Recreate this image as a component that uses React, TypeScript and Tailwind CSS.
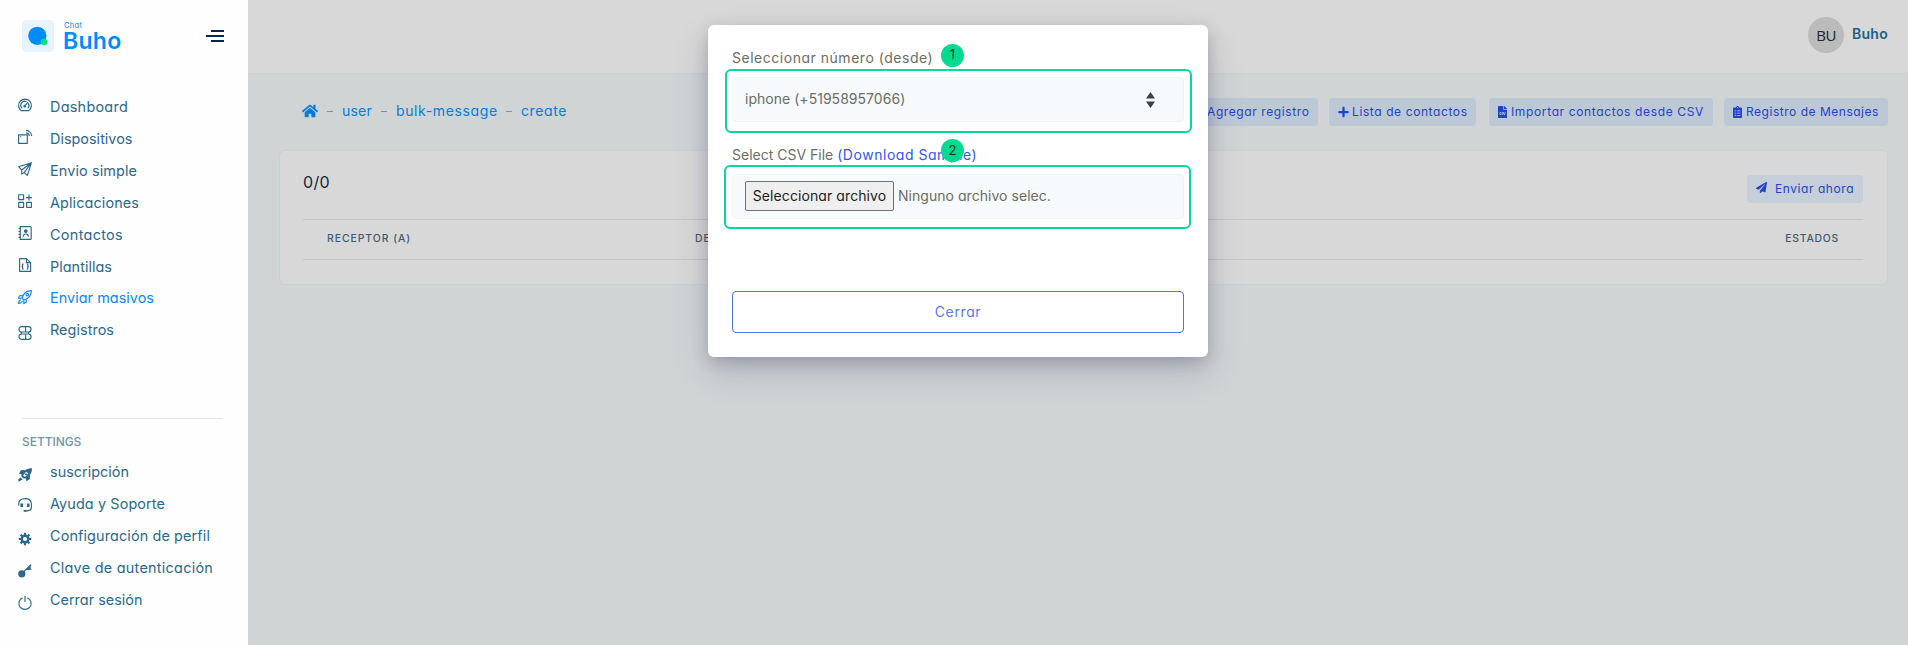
import type { ReactNode } from "react";
import { FaHome, FaPlus, FaFileCsv, FaClipboardList, FaPaperPlane } from "react-icons/fa";

function Icon({ children, shift = "" }: { children: ReactNode; shift?: string }) {
  return (
    <svg
      viewBox="0 0 14 14"
      className={`h-[14px] w-[14px] shrink-0 overflow-visible ${shift}`}
      fill="none"
      stroke="currentColor"
      strokeWidth="1.15"
      strokeLinejoin="round"
    >
      {children}
    </svg>
  );
}

const up = "mb-[3px]";
const down = "mt-[6px]";

const menu = [
  {
    label: "Dashboard",
    spacing: "tracking-[0.27px]",
    icon: (
      <Icon shift={up}>
        <path d="M3.2 12.6A6.4 6.4 0 1 1 10.8 12.6Z" />
        <path d="M4.2 10.2A4 4 0 0 1 8.6 3.6M10.3 5.2A4 4 0 0 1 9.8 10.2M6.6 8.4 10 4" />
        <circle cx="6.8" cy="8.2" r="0.9" />
      </Icon>
    ),
  },
  {
    label: "Dispositivos",
    spacing: "tracking-[0.02px]",
    icon: (
      <Icon shift={up}>
        <path d="M.6 4.8H9.3V13.4H.6ZM8.2 2.9A3.4 3.4 0 0 1 11.3 6M8 .4A6 6 0 0 1 13.7 6" />
        <path d="M2.3 6.6H3.2" />
      </Icon>
    ),
  },
  {
    label: "Envio simple",
    spacing: "tracking-[0.12px]",
    icon: (
      <Icon shift={up}>
        <path d="M13.4.7.6 4.7 3.7 8V12L6.2 10.6 9.4 13.3ZM13.4.7 3.7 8M13.4.7 6.2 10.6" />
      </Icon>
    ),
  },
  {
    label: "Aplicaciones",
    spacing: "tracking-[0.12px]",
    icon: (
      <Icon shift={up}>
        <path d="M.7.7H5.6V5.6H.7ZM.7 8.4H5.6V13.3H.7ZM8.6 8.4H13.4V13.3H8.6ZM11 .6V6.6M8 3.6H14" />
      </Icon>
    ),
  },
  {
    label: "Contactos",
    spacing: "tracking-[0.33px]",
    icon: (
      <Icon shift={up}>
        <path d="M2.2.6H12.2Q13.2.6 13.2 1.6V12.4Q13.2 13.4 12.2 13.4H2.2Z" />
        <path d="M.6 2.5H2.6M.6 5.4H2.6M.6 8.4H2.6M.6 11.4H2.6" />
        <circle cx="7.8" cy="5.1" r="1.3" fill="currentColor" />
        <path d="M5.2 10.6Q5.4 8 7.8 8T10.4 10.6" />
      </Icon>
    ),
  },
  {
    label: "Plantillas",
    spacing: "tracking-[0.04px]",
    icon: (
      <Icon shift={up}>
        <path d="M1.6.6H8.4L12.6 4.6V13.4H1.6ZM8.4.6V4.6H12.6" />
        <path d="M5.6 6H4.6V8L4 8.5 4.6 9V11H5.6M8.8 6H9.8V8L10.4 8.5 9.8 9V11H8.8" />
      </Icon>
    ),
  },
  {
    label: "Enviar masivos",
    spacing: "tracking-[0.05px]",
    active: true,
    icon: (
      <Icon shift={up}>
        <path d="M4 8.2C5 4 8.4.8 13.4.6 13.2 5.6 10 9 5.8 10ZM4.6 5.8 1.8 5.6.4 8.2 4 8.2M8.2 9.4V12.2L5.8 13.6V10M3 9.8Q.8 10.2.5 13.5 3.8 13.2 4.2 11" />
        <circle cx="9.3" cy="4.7" r="1.2" />
      </Icon>
    ),
  },
  {
    label: "Registros",
    spacing: "tracking-[0.06px]",
    icon: (
      <Icon shift={down}>
        <rect x="1" y=".6" width="12" height="5.4" rx="2.6" />
        <rect x="1" y="8" width="12" height="5.4" rx="2.6" />
        <path d="M7.6.6V6M7.6 8V13.4M3.4 6V8M10.6 6V8" />
      </Icon>
    ),
  },
];

const settings = [
  {
    label: "suscripción",
    spacing: "tracking-[0.03px]",
    icon: (
      <Icon shift={down}>
        <path
          d="M14 .2C11.6.2 9 .6 7.2 2.2L3 2 1 5.8 3.4 6.2V8.4L5.6 10.6H7.8L8.4 13.2 12 11 11.8 7C13.4 5.2 14 2.8 14 .2Z"
          fill="currentColor"
          stroke="none"
        />
        <path d="M5 7.2 8.2 3.8 10.4 5.6 7 9Z" fill="#fefefe" stroke="none" />
        <circle cx="8" cy="6.2" r="1" fill="currentColor" stroke="none" />
        <path d="M2.6 9.6 4.6 11.4.6 13.8.2 11.4Z" fill="currentColor" stroke="none" />
      </Icon>
    ),
  },
  {
    label: "Ayuda y Soporte",
    spacing: "tracking-[0.12px]",
    icon: (
      <Icon shift="mt-[2px]">
        <path d="M.7 7.4V5.6Q1 .7 7 .6T13.4 5.8V9.6Q13.2 12.6 10 12.8H7" />
        <path d="M3.7 5.4V9M10.2 5.4V9" strokeWidth="2.6" />
        <path d="M5.6 12.8H8.6" strokeWidth="1.8" />
      </Icon>
    ),
  },
  {
    label: "Configuración de perfil",
    spacing: "tracking-[0.13px]",
    icon: (
      <Icon shift={down}>
        <circle cx="7" cy="7" r="3.3" strokeWidth="2.4" />
        <path
          d="M7 .7V3M7 11V13.3M.7 7H3M11 7H13.3M2.6 2.6 4.2 4.2M9.8 9.8 11.4 11.4M11.4 2.6 9.8 4.2M4.2 9.8 2.6 11.4"
          strokeWidth="2.2"
        />
      </Icon>
    ),
  },
  {
    label: "Clave de autenticación",
    spacing: "tracking-[0.27px]",
    icon: (
      <Icon shift={down}>
        <circle cx="3.8" cy="9.8" r="3.6" fill="currentColor" stroke="none" />
        <path d="M5.4 8 13.2.8" strokeWidth="1.2" />
        <path d="M8 5.4 11.2 1.8 12.6.8V4.4L14 5.2 10.8 6.2Z" fill="currentColor" stroke="none" />
      </Icon>
    ),
  },
  {
    label: "Cerrar sesión",
    spacing: "tracking-[0.02px]",
    icon: (
      <Icon shift={down}>
        <path d="M4.6 1.7A6.1 6.1 0 1 0 9.4 1.7M7 0V6" />
      </Icon>
    ),
  },
];

function Sidebar() {
  return (
    <aside className="flex h-full w-[248px] shrink-0 flex-col bg-[#fefefe] text-[14.4px] text-[#2b688d]">
      <div className="flex h-[91px] shrink-0 items-start justify-between pl-[22px] pr-6 pt-5">
        <div className="flex gap-[10px]">
          <svg viewBox="0 0 32 32" className="h-8 w-8">
            <rect width="32" height="32" rx="4" fill="#e7f2ff" />
            <circle cx="15.3" cy="15.8" r="9.1" fill="#008cff" />
            <circle cx="22" cy="22" r="3.3" fill="#00e676" />
          </svg>
          <div className="flex flex-col text-[#008cff]">
            <span className="mt-[2px] text-[7.5px] leading-[8px] tracking-[0.3px]">Chat</span>
            <span className="-ml-px text-[23px] font-semibold leading-[22px] tracking-[0.3px]">Buho</span>
          </div>
        </div>
        <div className="mt-[10px] flex flex-col items-end gap-[3px]">
          <i className="h-[2px] w-[13px] bg-[#00275a]" />
          <i className="h-[2px] w-[18px] bg-[#00275a]" />
          <i className="h-[2px] w-[13px] bg-[#00275a]" />
        </div>
      </div>
      <nav>
        {menu.map((m) => (
          <a
            key={m.label}
            className={`flex h-[31.9px] items-center gap-[18px] pl-[18px] ${m.active ? "text-[#0a86ff]" : ""}`}
          >
            {m.icon}
            <span className={m.spacing}>{m.label}</span>
          </a>
        ))}
      </nav>
      <hr className="ml-[22px] mr-[25px] mt-[71.6px] border-[#e2e5e8]" />
      <h6 className="mb-[6px] ml-[22px] mt-[15px] text-[12px] font-medium leading-[16px] tracking-[-0.05px] text-[#7393a9]">
        SETTINGS
      </h6>
      <nav>
        {settings.map((m) => (
          <a key={m.label} className="flex h-8 items-center gap-[18px] pl-[18px]">
            {m.icon}
            <span className={m.spacing}>{m.label}</span>
          </a>
        ))}
      </nav>
    </aside>
  );
}

function Pill({ icon, children, className = "" }: { icon: ReactNode; children: string; className?: string }) {
  return (
    <button
      className={`flex h-7 shrink-0 items-center whitespace-nowrap rounded-[4px] text-[12px] text-[#1f42cb] ${className}`}
    >
      {icon}
      <span>{children}</span>
    </button>
  );
}

function Dash() {
  return (
    <span className="flex w-6 justify-center">
      <i className="h-px w-[6px] bg-[#84919b]" />
    </span>
  );
}

function Main() {
  return (
    <main className="flex h-full min-w-0 flex-1 flex-col bg-[#d0d4d5]">
      <header className="flex h-[74px] shrink-0 items-start justify-end border-b border-[#cbcfd1] bg-[#d8d8d8] pr-5 pt-[17px]">
        <div className="flex h-9 w-9 items-center justify-center rounded-full bg-[#bbbbbb] font-['Open_Sans',sans-serif] text-[15px] text-[#222]">
          <span className="tracking-[-0.5px]">BU</span>
        </div>
        <span className="ml-2 w-9 pt-[7px] text-[14px] font-semibold leading-5 tracking-[0.27px] text-[#1c5f86]">Buho</span>
      </header>

      <div className="flex h-[76px] shrink-0 items-start justify-between pl-[54px] pr-5 pt-6">
        <div className="flex h-[26px] items-center whitespace-nowrap text-[14px] text-[#057bdc]">
          <FaHome className="h-4 w-4" />
          <Dash />
          <span className="w-[30px] pb-px tracking-[0.22px]">user</span>
          <Dash />
          <span className="w-[101px] pb-px tracking-[0.62px]">bulk-message</span>
          <Dash />
          <span className="pb-px tracking-[0.6px]">create</span>
        </div>
        <div className="flex">
          <Pill className="w-[144px] bg-[#bdc8d7] pl-[9px] tracking-[0.6px]" icon={<FaPlus className="mr-[13px] h-3 w-[11px]" />}>
            Agregar registro
          </Pill>
          <Pill className="ml-[11px] w-[147px] bg-[#bdc8d7] pl-[9px] tracking-[0.6px]" icon={<FaPlus className="mr-[3px] h-3 w-[11px]" />}>
            Lista de contactos
          </Pill>
          <Pill className="ml-[13px] w-[224px] bg-[#bdc8d7] pl-[9px] tracking-[0.64px]" icon={<FaFileCsv className="mr-[4px] h-3 w-[9px]" />}>
            Importar contactos desde CSV
          </Pill>
          <Pill className="ml-[11px] w-[164px] bg-[#bdc8d7] pl-[9px] tracking-[0.52px]" icon={<FaClipboardList className="mr-[4px] h-3 w-[9px]" />}>
            Registro de Mensajes
          </Pill>
        </div>
      </div>

      <section className="ml-[31px] mr-[20px] h-[135px] shrink-0 rounded-[6px] border border-[#cccfd2] bg-[#d8d8d8] pl-[23px] pr-6">
        <div className="flex h-[68px] items-start justify-between pt-6">
          <h4 className="-mt-px text-[16px] leading-[16px] tracking-[0.3px] text-[#1c2640]">0/0</h4>
          <Pill className="w-[116px] bg-[#c5ced9] pl-[9px] tracking-[0.56px]" icon={<FaPaperPlane className="mb-1 mr-2 h-[11px] w-[11px]" />}>
            Enviar ahora
          </Pill>
        </div>
        <div className="flex h-[41px] items-center border-y border-[#c3c5c7] pb-px text-[10.4px] font-medium text-[#44586f]">
          <span className="w-[392px] shrink-0 pl-6 tracking-[0.96px]">RECEPTOR (A)</span>
          <span className="flex-1 tracking-[0.96px]">DE</span>
          <span className="pr-6 tracking-[0.75px]">ESTADOS</span>
        </div>
      </section>
    </main>
  );
}

function Step({ n, className }: { n: string; className: string }) {
  return (
    <span
      className={`absolute left-[233px] flex h-[23px] w-[23px] items-center justify-center rounded-full bg-[#00db8f] text-[13px] text-[#06301f] ${className}`}
    >
      {n}
    </span>
  );
}

function Modal() {
  return (
    <div className="absolute left-[708px] top-[25px] flex h-[332px] w-[500px] flex-col rounded-[6px] bg-white px-6 pt-4 text-[14px] text-[#6c6c64] shadow-[0_15px_35px_rgba(50,50,93,0.2),0_5px_15px_rgba(0,0,0,0.17)]">
      <label className="flex h-9 items-center pb-[3px] leading-[22px] tracking-[0.52px]">Seleccionar número (desde)</label>
      <div className="flex h-[45px] shrink-0 items-center justify-between rounded-[4px] border border-[#f0f4f6] bg-[#f6fafd] pl-3 pr-7">
        <span className="pb-0.5 tracking-[0.03px]">iphone (+51958957066)</span>
        <svg viewBox="0 0 9 16" className="h-4 w-[9px]" fill="#404040">
          <path d="M4.5 0 9 6.5H0ZM4.5 16 0 9.5H9Z" />
        </svg>
      </div>
      <label className="mt-[16px] flex h-9 items-center gap-[4px] pb-[3px]">
        <span>Select CSV File</span>
        <a className="tracking-[0.53px] text-[#3355f0]">(Download Sample)</a>
      </label>
      <div className="flex h-[45px] shrink-0 items-center gap-[4px] rounded-[4px] border border-[#f0f4f6] bg-[#f6fafd] pb-px pl-3">
        <button className="h-[30px] w-[149px] whitespace-nowrap rounded-[2px] border border-[#707070] bg-[#efefef] pb-px text-[14px] tracking-[0.09px] text-[#1c1c1c]">
          Seleccionar archivo
        </button>
        <span className="pb-px tracking-[0.04px]">Ninguno archivo selec.</span>
      </div>
      <button className="mt-[72px] h-[42px] shrink-0 rounded-[4px] border border-[#4f72e4] pb-px tracking-[0.62px] text-[#5e78e6]">
        Cerrar
      </button>
      <div className="absolute left-[17px] top-[44px] h-[64px] w-[467px] rounded-[6px] border-2 border-[#00db95]" />
      <div className="absolute left-[16px] top-[140px] h-[64px] w-[467px] rounded-[6px] border-2 border-[#00db95]" />
      <Step n="1" className="top-[18.5px]" />
      <Step n="2" className="top-[114px]" />
    </div>
  );
}

export default function App() {
  return (
    <div className="relative flex h-[645px] w-full overflow-hidden font-['Inter',sans-serif] leading-normal [font-feature-settings:'cv11']">
      <Sidebar />
      <Main />
      <Modal />
    </div>
  );
}
